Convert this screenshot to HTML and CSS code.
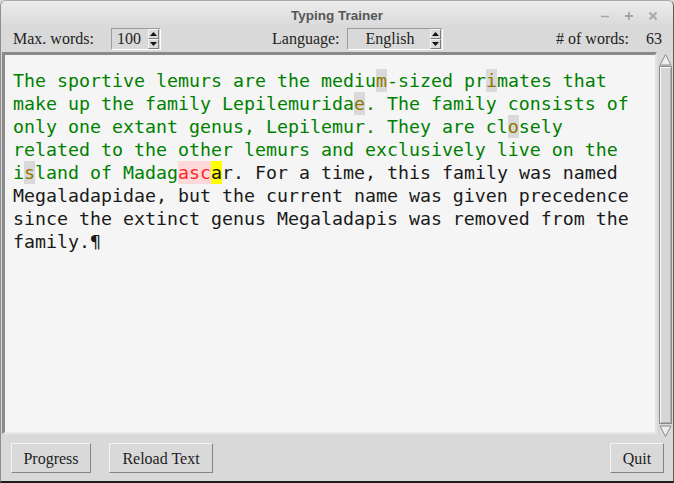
FILE: index.html
```html
<!DOCTYPE html>
<html>
<head>
<meta charset="utf-8">
<title>Typing Trainer</title>
<link rel="stylesheet" href="styles.css">
</head>
<body>
<div class="window">
  <div class="titlebar">
    <div></div>
    <div class="title">Typing Trainer</div>
    <div class="controls">
      <span class="ctl"><svg width="10" height="10" viewBox="0 0 10 10"><line x1="1" y1="5.5" x2="9" y2="5.5" stroke="#a6a6a6" stroke-width="1.6"/></svg></span>
      <span class="ctl"><svg width="10" height="10" viewBox="0 0 10 10"><line x1="1" y1="5" x2="9" y2="5" stroke="#a6a6a6" stroke-width="1.8"/><line x1="5" y1="1" x2="5" y2="9" stroke="#a6a6a6" stroke-width="1.8"/></svg></span>
      <span class="ctl"><svg width="10" height="10" viewBox="0 0 10 10"><line x1="1.5" y1="1.5" x2="8.5" y2="8.5" stroke="#a6a6a6" stroke-width="1.8"/><line x1="8.5" y1="1.5" x2="1.5" y2="8.5" stroke="#a6a6a6" stroke-width="1.8"/></svg></span>
    </div>
  </div>

  <div class="toolbar">
    <span class="label lbl-max">Max. words:</span>
    <div class="spin spin-max">
      <span class="val val-right">100</span>
      <span class="arrows">
        <span class="ab"><svg width="7" height="4" viewBox="0 0 7 4"><polygon points="0,4 7,4 3.5,0" fill="#111"/></svg></span>
        <span class="ab"><svg width="7" height="4" viewBox="0 0 7 4"><polygon points="0,0 7,0 3.5,4" fill="#111"/></svg></span>
      </span>
    </div>
    <span class="label lbl-lang">Language:</span>
    <div class="spin spin-lang">
      <span class="val val-center">English</span>
      <span class="arrows">
        <span class="ab"><svg width="7" height="4" viewBox="0 0 7 4"><polygon points="0,4 7,4 3.5,0" fill="#111"/></svg></span>
        <span class="ab"><svg width="7" height="4" viewBox="0 0 7 4"><polygon points="0,0 7,0 3.5,4" fill="#111"/></svg></span>
      </span>
    </div>
    <span class="label lbl-count">#&nbsp;of words:</span>
    <span class="label count">63</span>
  </div>

  <div class="main">
    <div class="textframe">
      <div class="line"><span class="ok">The sportive lemurs are the mediu</span><span class="err">m</span><span class="ok">-sized pr</span><span class="err">i</span><span class="ok">mates that</span></div>
      <div class="line"><span class="ok">make up the family Lepilemurida</span><span class="err">e</span><span class="ok">. The family consists of</span></div>
      <div class="line"><span class="ok">only one extant genus, Lepilemur. They are cl</span><span class="err">o</span><span class="ok">sely</span></div>
      <div class="line"><span class="ok">related to the other lemurs and exclusively live on the</span></div>
      <div class="line"><span class="ok">i</span><span class="err">s</span><span class="ok">land of Madag</span><span class="bad">asc</span><span class="cur">a</span>r. For a time, this family was named</div>
      <div class="line">Megaladapidae, but the current name was given precedence</div>
      <div class="line">since the extinct genus Megaladapis was removed from the</div>
      <div class="line">family.¶</div>
    </div>
    <div class="scrollbar">
      <div class="sb-arrow"><svg width="13" height="13" viewBox="0 0 13 13"><polygon points="6.5,1.5 12,12 1,12" fill="#ededed" stroke="#8c8c8c" stroke-width="1"/></svg></div>
      <div class="sb-track"><div class="sb-thumb"></div></div>
      <div class="sb-arrow"><svg width="13" height="13" viewBox="0 0 13 13"><polygon points="1,1 12,1 6.5,11.5" fill="#ededed" stroke="#8c8c8c" stroke-width="1"/></svg></div>
    </div>
  </div>

  <div class="buttons">
    <button class="btn btn-progress">Progress</button>
    <button class="btn btn-reload">Reload Text</button>
    <button class="btn btn-quit">Quit</button>
  </div>
</div>
</body>
</html>
```

FILE: styles.css
```css
* { box-sizing: border-box; }
html, body { margin: 0; padding: 0; }
body {
  width: 674px;
  height: 483px;
  overflow: hidden;
  background: #d9d9d9;
  font-family: "Liberation Serif", serif;
}
.window {
  width: 674px;
  height: 483px;
  display: flex;
  flex-direction: column;
  background: #d9d9d9;
  border: 1px solid #a9a9a9;
  border-left-color: #8e8e8e;
  border-right-color: #5a5a5a;
  border-bottom: 2px solid #1c1c1c;
  border-radius: 6px 6px 0 0;
  overflow: hidden;
}
.titlebar {
  height: 25px;
  flex: none;
  display: grid;
  grid-template-columns: 1fr auto 1fr;
  align-items: center;
  background: linear-gradient(#ececec, #dadada);
  padding-top: 4px;
}
.title {
  font-family: "Liberation Sans", sans-serif;
  font-weight: bold;
  font-size: 13.5px;
  color: #565656;
}
.controls {
  display: flex;
  justify-content: flex-end;
  padding-right: 8px;
}
.ctl {
  width: 24px;
  height: 14px;
  display: flex;
  align-items: center;
  justify-content: center;
}
.toolbar {
  height: 26px;
  flex: none;
  display: flex;
  align-items: center;
  padding-left: 12px;
  padding-right: 11px;
}
.label {
  font-size: 16px;
  color: #1e1e1e;
  white-space: nowrap;
}
.lbl-max { width: 98px; }
.lbl-lang { width: 75px; margin-left: 111px; }
.lbl-count { margin-left: 113px; }
.count { margin-left: auto; }
.spin {
  height: 22px;
  display: flex;
  border: 1px solid;
  border-color: #9c9c9c #ffffff #ffffff #9c9c9c;
  font-size: 16px;
  color: #1e1e1e;
}
.spin-max { width: 50px; }
.spin-lang { width: 96px; }
.val {
  flex: 1;
  display: flex;
  align-items: center;
}
.val-right { justify-content: flex-end; padding-right: 7px; }
.val-center { justify-content: center; padding-left: 2px; }
.arrows {
  width: 11px;
  display: flex;
  flex-direction: column;
  margin-right: 1px;
}
.ab {
  flex: 1;
  display: flex;
  align-items: center;
  justify-content: center;
  border: 1px solid;
  border-color: #f4f4f4 #7c7c7c #7c7c7c #f4f4f4;
}
.main {
  height: 386px;
  flex: none;
  display: flex;
  align-items: flex-start;
  padding-left: 1px;
  gap: 1px;
}
.textframe {
  width: 655px;
  height: 382px;
  border-style: solid;
  border-width: 3px 2px 2px 3px;
  border-color: #8a8a8a #e4e4e4 #e8e8e8 #8a8a8a;
  background: #f5f5f5;
  padding: 14px 0 0 8px;
  font-family: "DejaVu Sans Mono", monospace;
  font-size: 18.27px;
  line-height: 23px;
  color: #1a1a1a;
}
.line { height: 23px; white-space: pre; }
.ok { color: #008000; }
.err {
  display: inline-block;
  height: 23px;
  color: #8e7600;
  background: #d9d9d9;
}
.bad {
  display: inline-block;
  height: 23px;
  color: #ff2626;
  background: #ffd9d9;
}
.cur {
  display: inline-block;
  height: 23px;
  color: #111;
  background: #ffff00;
}
.scrollbar {
  width: 15px;
  height: 386px;
  display: flex;
  flex-direction: column;
  padding: 0 1px 0 1px;
  background: #d9d9d9;
}
.sb-arrow {
  height: 14px;
  flex: none;
  display: flex;
  align-items: center;
  justify-content: center;
}
.sb-track {
  flex: 1;
  display: flex;
}
.sb-thumb {
  flex: 1;
  border: 1px solid #8a8a8a;
  box-shadow: inset 1px 1px #fafafa, inset -1px -1px #b0b0b0;
  background: #d6d6d6;
}
.buttons {
  flex: 1;
  display: flex;
  align-items: flex-start;
  padding: 5px 9px 0 10px;
}
.btn {
  height: 30px;
  border: 1px solid;
  border-color: #f4f4f4 #848484 #848484 #f4f4f4;
  background: #d9d9d9;
  font-family: "Liberation Serif", serif;
  font-size: 16px;
  color: #1e1e1e;
  padding: 2px 0 0 0;
  margin: 0;
}
.btn-progress { width: 80px; }
.btn-reload { width: 104px; margin-left: 18px; }
.btn-quit { width: 54px; margin-left: auto; }
```
